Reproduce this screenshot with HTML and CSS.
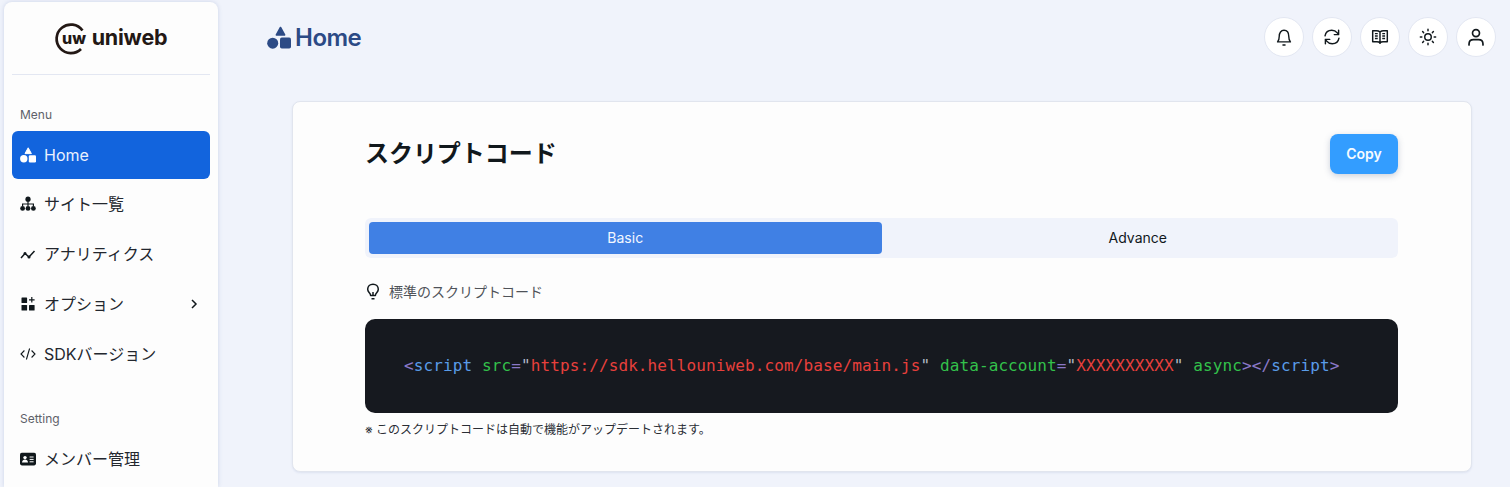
FILE: index.html
```html
<!DOCTYPE html>
<html lang="ja">
<head>
<meta charset="utf-8">
<title>uniweb Home</title>
<link rel="stylesheet" href="styles.css">
</head>
<body>
<div class="app">
  <aside class="sidebar">
    <div class="logo">
      <svg class="logo-mark" width="32" height="32" viewBox="0 0 32 32">
        <path d="M27.500 8.500A14.300 14.300 0 1 0 26 27" fill="none" stroke="#231815" stroke-width="2.700"/>
        <text x="7" y="21.500" textLength="24" lengthAdjust="spacingAndGlyphs" class="logo-uw">uw</text>
      </svg>
      <span class="logo-text">uniweb</span>
    </div>
    <p class="nav-label">Menu</p>
    <nav class="nav">
      <a class="nav-item active">
        <svg class="nav-icon" viewBox="0 0 16 16" fill="currentColor"><path d="M8.200 .8 11.400 6.600H5Z" stroke="currentColor" stroke-linejoin="round"/><circle cx="3.800" cy="11.800" r="3.700"/><rect x="8.800" y="8.200" width="7.200" height="7.200" rx="1.200"/></svg>
        <span>Home</span>
      </a>
      <a class="nav-item">
        <svg class="nav-icon" viewBox="0 0 16 16" fill="currentColor"><circle cx="8" cy="3.200" r="2.600"/><circle cx="2.600" cy="12.400" r="2.400"/><circle cx="8" cy="12.400" r="2.400"/><circle cx="13.400" cy="12.400" r="2.400"/><path d="M7.400 5h1.200v2.400h5.400V10h-1.200V8.600H8.600V10H7.400V8.600H3.200V10H2V7.400h5.400Z"/></svg>
        <span class="ja">サイト一覧</span>
      </a>
      <a class="nav-item">
        <svg class="nav-icon" viewBox="0 0 16 16" fill="none" stroke="currentColor" stroke-width="1.500"><path d="M1 12 5 7.500l4 3.500 5.500-6"/><circle cx="5" cy="7.500" r=".8" fill="currentColor"/><circle cx="9" cy="11" r=".8" fill="currentColor"/></svg>
        <span class="ja">アナリティクス</span>
      </a>
      <a class="nav-item">
        <svg class="nav-icon" viewBox="0 0 16 16" fill="currentColor"><rect x="1.500" y="1.500" width="5.600" height="5.600" rx=".6"/><rect x="1.500" y="9" width="5.600" height="5.600" rx=".6"/><rect x="9" y="9" width="5.600" height="5.600" rx=".6"/><path d="M11.200 1h1.200v2.200h2.200v1.200h-2.200v2.200h-1.200V4.400H9V3.200h2.200Z"/></svg>
        <span class="ja">オプション</span>
        <svg class="chevron" width="8" height="12" viewBox="0 0 8 12" fill="none" stroke="currentColor" stroke-width="1.500"><path d="M2 2l4 4-4 4"/></svg>
      </a>
      <a class="nav-item">
        <svg class="nav-icon" viewBox="0 0 16 16" fill="none" stroke="currentColor" stroke-width="1.100"><path d="M4.400 4.500 1 8l3.400 3.500M11.600 4.500 15 8l-3.400 3.500M9.600 2.500 6.400 13.500"/></svg>
        <span class="ja">SDKバージョン</span>
      </a>
    </nav>
    <p class="nav-label nav-label-second">Setting</p>
    <nav class="nav">
      <a class="nav-item">
        <svg class="nav-icon" viewBox="0 0 16 16"><rect y="1.800" width="16" height="12.600" rx="1.800" fill="currentColor"/><circle cx="5" cy="6.600" r="1.700" fill="#fff"/><path d="M2 11.600c0-4 6-4 6 0Z" fill="#fff"/><path d="M9.600 6h4M9.600 8.400h4M9.600 10.800h4" stroke="#fff"/></svg>
        <span class="ja">メンバー管理</span>
      </a>
    </nav>
  </aside>

  <main class="main">
    <header class="topbar">
      <h1 class="page-title">
        <svg width="24" height="24" viewBox="0 0 24 24" fill="currentColor"><path d="M13.500 2.500 17.600 10H9.400Z" stroke="currentColor" stroke-width="1.600" stroke-linejoin="round"/><circle cx="5.700" cy="18.200" r="5.500"/><rect x="13" y="12.600" width="11" height="11" rx="1.800"/></svg>
        <span>Home</span>
      </h1>
      <div class="actions">
        <button class="round-btn"><svg viewBox="1 1 14 14" fill="none" stroke="currentColor" stroke-width="1.100"><path d="M3 11.800c1-1.100 1.300-2.200 1.300-4.300C4.300 4.700 5.700 2.800 8 2.800s3.700 1.900 3.700 4.700c0 2.100.3 3.200 1.300 4.300ZM6.800 14.200h2.400" stroke-linejoin="round"/></svg></button>
        <button class="round-btn"><svg viewBox=".5 .5 15 15" fill="none" stroke="currentColor" stroke-width="1.200" stroke-linecap="round" stroke-linejoin="round"><path d="M2.200 7C2.700 4.200 5 2.300 7.800 2.300c1.900 0 3.500.9 4.600 2.300l1.100 1.400M13.500 2.300V6H9.900M13.800 9c-.5 2.800-2.800 4.700-5.600 4.700-1.900 0-3.500-.9-4.600-2.300l-1.100-1.400M2.500 13.700V10h3.600"/></svg></button>
        <button class="round-btn"><svg viewBox="0 0 16 16" fill="none" stroke="currentColor" stroke-width="1.300" stroke-linejoin="round"><path d="M8 3.500C7 2.700 6 2.400 4.800 2.400H1.500v9.800h3.800c1.100 0 2 .3 2.700 1 .7-.7 1.600-1 2.700-1h3.800V2.400h-3.300C10 2.400 9 2.700 8 3.500ZM8 3.500v10.800M3.500 5h2.500M3.500 7.200h2.500M3.500 9.400h2.500M10 5h2.500M10 7.200h2.500M10 9.400h2.500"/></svg></button>
        <button class="round-btn"><svg viewBox="0 0 16 16" fill="none" stroke="currentColor" stroke-width="1.300" stroke-linecap="round"><circle cx="8" cy="8" r="2.900"/><path d="M8 1.200v1.300M8 13.500v1.300M1.200 8h1.300M13.500 8h1.300M3.200 3.200l.9.900M11.900 11.900l.9.900M3.200 12.800l.9-.900M11.900 4.100l.9-.900"/></svg></button>
        <button class="round-btn"><svg viewBox="0 0 16 16" fill="none" stroke="currentColor" stroke-width="1.500" stroke-linecap="round"><circle cx="8" cy="4.500" r="3.100"/><path d="M1.800 15v-.8c0-2.300 1.700-3.800 4-3.800h4.400c2.300 0 4 1.500 4 3.800v.8"/></svg></button>
      </div>
    </header>

    <section class="card">
      <div class="card-head">
        <h2 class="card-title">スクリプトコード</h2>
        <button class="copy-btn">Copy</button>
      </div>
      <div class="tabs">
        <div class="tab tab-active">Basic</div>
        <div class="tab">Advance</div>
      </div>
      <div class="hint">
        <svg width="16" height="18" viewBox="0 0 16 18" fill="none" stroke="currentColor" stroke-width="1.500" stroke-linejoin="round"><path d="M5.600 12.500c0-1.300-.6-2-1.500-3C3.300 8.600 2.700 7.500 2.700 6.300 2.700 3.400 5 1.200 8 1.200s5.300 2.200 5.300 5.100c0 1.200-.6 2.300-1.400 3.200-.9 1-1.500 1.700-1.500 3ZM6.500 15.800h3"/><path d="M8 12.500V9"/></svg>
        <span class="ja">標準のスクリプトコード</span>
      </div>
      <pre class="code"><code><span class="c-punct">&lt;</span><span class="c-tag">script</span> <span class="c-attr">src</span><span class="c-punct">=</span><span class="c-quote">"</span><span class="c-str">https://sdk.hellouniweb.com/base/main.js</span><span class="c-quote">"</span> <span class="c-attr">data-account</span><span class="c-punct">=</span><span class="c-quote">"</span><span class="c-str">XXXXXXXXXX</span><span class="c-quote">"</span> <span class="c-attr">async</span><span class="c-punct">&gt;&lt;/</span><span class="c-tag">script</span><span class="c-punct">&gt;</span></code></pre>
      <p class="note">※ このスクリプトコードは自動で機能がアップデートされます。</p>
    </section>
  </main>
</div>
</body>
</html>
```
FILE: styles.css
```css
* { box-sizing: border-box; }
html, body { margin: 0; height: 100%; overflow: hidden; }
body {
  background: #f0f3fb;
  color: #11181c;
  font-family: Inter, "Noto Sans CJK JP", sans-serif;
}
.app { display: flex; height: 487px; overflow: hidden; }

.sidebar {
  flex: none;
  width: 214px;
  height: 485px;
  margin: 2px 0 0 4px;
  padding: 0 8px;
  background: #fdfdfd;
  border-radius: 8px 8px 0 0;
  box-shadow: 0 0 4px rgba(120, 140, 190, .3);
}
.logo {
  height: 73px;
  display: flex;
  align-items: center;
  justify-content: center;
  gap: 5px;
  border-bottom: 1px solid #e3e7f2;
}
.logo-mark { flex: none; overflow: visible; }
.logo-uw { font: 800 15px Inter, sans-serif; fill: #231815; }
.logo-text { font: 700 21.5px/1 Inter, sans-serif; color: #231815; letter-spacing: -.2px; }

.nav-label {
  margin: 32px 0 0;
  padding-left: 8px;
  font-size: 12px;
  line-height: 16px;
  color: #5d6169;
}
.nav-label-second { margin-top: 33px; }
.nav { display: flex; flex-direction: column; gap: 2px; margin-top: 8px; }
.nav-item {
  display: flex;
  align-items: center;
  gap: 8px;
  height: 48px;
  padding: 0 8px;
  border-radius: 6px;
  font-size: 16px;
  color: #23272e;
}
.nav-item.active { background: #1264dd; color: #e9f1fe; margin-bottom: -1px; }
.ja { margin-bottom: 2px; }
.nav-icon { width: 16px; height: 16px; flex: none; color: #11181c; }
.active .nav-icon { color: #fff; }
.chevron { margin-left: auto; margin-right: 4px; color: #11181c; }

.main { flex: 1; min-width: 0; padding: 0 14px 0 49px; }
.topbar {
  display: flex;
  align-items: center;
  justify-content: space-between;
  height: 74px;
}
.page-title {
  display: flex;
  align-items: center;
  gap: 4px;
  margin: 0;
  font-size: 24px;
  font-weight: 600;
  letter-spacing: -.5px;
  color: #2c4a85;
}
.actions { display: flex; gap: 8px; }
.round-btn {
  display: flex;
  align-items: center;
  justify-content: center;
  width: 40px;
  height: 40px;
  padding: 0;
  border: 1px solid #e3e7f2;
  border-radius: 50%;
  background: #fff;
  color: #11181c;
}
.round-btn svg { width: 18px; height: 18px; }

.card {
  width: 1180px;
  height: 371px;
  margin: 27px 0 0 25px;
  padding: 32px 73px 0 72px;
  background: #fdfdfd;
  border: 1px solid #e1e5ee;
  border-radius: 8px;
  box-shadow: 0 1px 2px rgba(120, 140, 190, .15);
}
.card-head { display: flex; align-items: center; justify-content: space-between; height: 40px; }
.card-title { margin: 0; font-size: 24px; line-height: 36px; font-weight: 600; letter-spacing: -.05px; color: #11181c; }
.copy-btn {
  width: 68px;
  height: 40px;
  padding: 0 0 2px;
  border: 0;
  border-radius: 8px;
  background: #339dff;
  color: #f6fbff;
  font: 600 14px Inter, sans-serif;
  box-shadow: 0 2px 6px rgba(60, 80, 120, .25);
}
.tabs {
  display: flex;
  height: 40px;
  margin-top: 44px;
  padding: 4px;
  background: #f0f3fb;
  border-radius: 6px;
}
.tab {
  flex: 1;
  display: flex;
  align-items: center;
  justify-content: center;
  padding-bottom: 1px;
  border-radius: 4px;
  font-size: 14px;
  color: #11181c;
}
.tab-active { background: #4080e4; color: #f2f7ff; }
.hint {
  display: flex;
  align-items: center;
  gap: 8px;
  margin-top: 25px;
  height: 18px;
  font-size: 14px;
  color: #4f5359;
}
.hint svg { color: #11181c; flex: none; }
.code {
  display: flex;
  align-items: center;
  height: 94px;
  margin: 18px 0 0;
  padding: 0 39px;
  background: #16191f;
  border-radius: 10px;
  font: 16px/24px "DejaVu Sans Mono", monospace;
  letter-spacing: .11px;
  color: #c9d1d9;
}
.c-punct { color: #8a78c8; }
.c-tag { color: #5a9ce8; }
.c-attr { color: #33c14b; }
.c-str { color: #e8403c; }
.c-quote { color: #b4bac6; }
.note { margin: 9px 0 0; font-size: 12px; line-height: 16px; color: #2a2e35; }
```
